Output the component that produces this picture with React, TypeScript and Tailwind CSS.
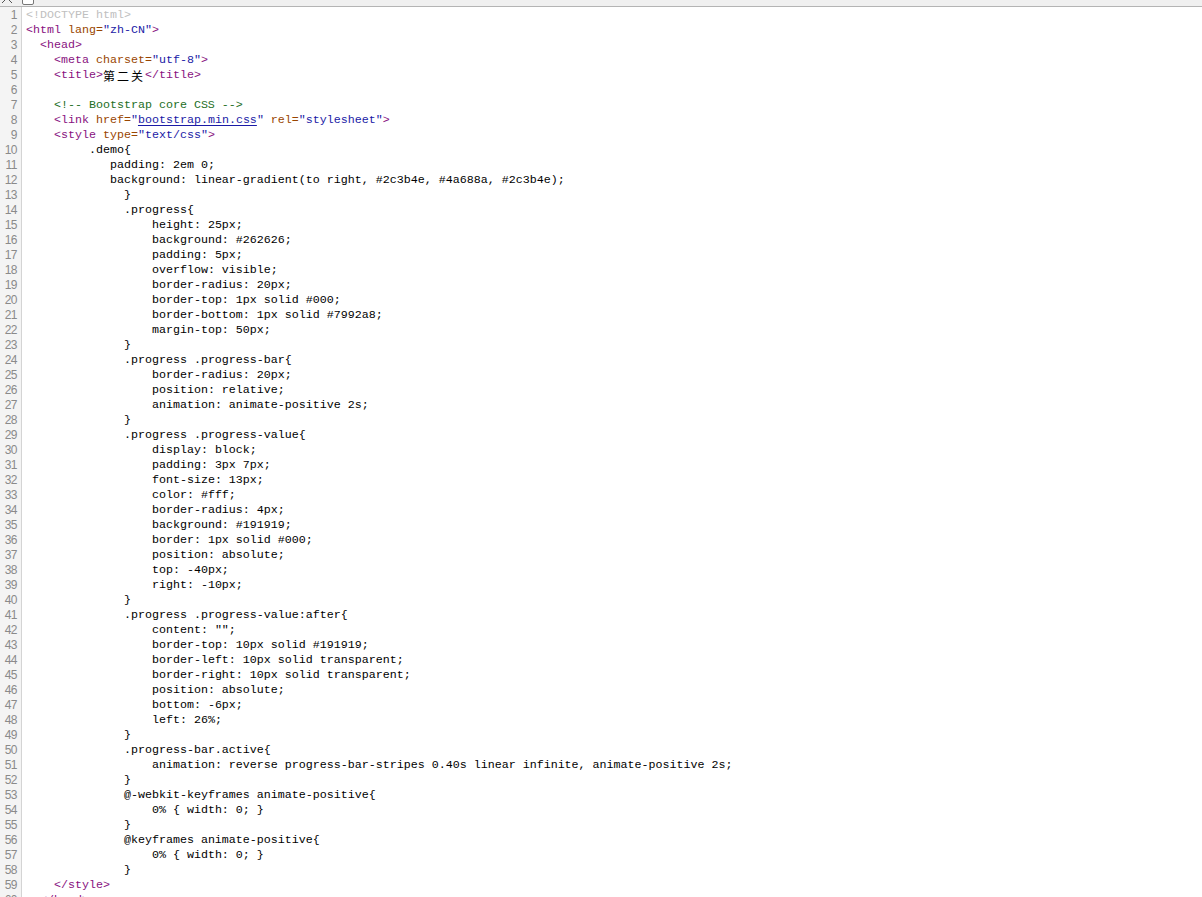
import React from 'react';

type Kind = 'tag' | 'attr' | 'val' | 'cmt' | 'doc' | 'txt' | 'link' | 'cjk';
type Seg = [Kind, string];

interface Line {
  indent: number;
  segs: Seg[];
}

const kindClass: Record<Kind, string> = {
  tag: 'text-[#881280]',
  attr: 'text-[#994500]',
  val: 'text-[#1a1aa6]',
  cmt: 'text-[#236e25]',
  doc: 'text-[#c0c0c0]',
  txt: 'text-black',
  link: 'text-[#1a1aa6] underline underline-offset-2',
  cjk: 'inline-block align-top leading-[15px] text-[12px] text-black tracking-[2px] font-["Noto_Sans_CJK_SC",sans-serif]',
};

const css = (indent: number, text: string): Line => ({ indent, segs: [['txt', text]] });

const lines: Line[] = [
  { indent: 0, segs: [['doc', '<!DOCTYPE html>']] },
  { indent: 0, segs: [['tag', '<html'], ['attr', ' lang='], ['val', '"zh-CN"'], ['tag', '>']] },
  { indent: 2, segs: [['tag', '<head>']] },
  { indent: 4, segs: [['tag', '<meta'], ['attr', ' charset='], ['val', '"utf-8"'], ['tag', '>']] },
  { indent: 4, segs: [['tag', '<title>'], ['cjk', '第二关'], ['tag', '</title>']] },
  { indent: 0, segs: [] },
  { indent: 4, segs: [['cmt', '<!-- Bootstrap core CSS -->']] },
  {
    indent: 4,
    segs: [
      ['tag', '<link'],
      ['attr', ' href='],
      ['val', '"'],
      ['link', 'bootstrap.min.css'],
      ['val', '"'],
      ['attr', ' rel='],
      ['val', '"stylesheet"'],
      ['tag', '>'],
    ],
  },
  { indent: 4, segs: [['tag', '<style'], ['attr', ' type='], ['val', '"text/css"'], ['tag', '>']] },
  css(9, '.demo{'),
  css(12, 'padding: 2em 0;'),
  css(12, 'background: linear-gradient(to right, #2c3b4e, #4a688a, #2c3b4e);'),
  css(14, '}'),
  css(14, '.progress{'),
  css(18, 'height: 25px;'),
  css(18, 'background: #262626;'),
  css(18, 'padding: 5px;'),
  css(18, 'overflow: visible;'),
  css(18, 'border-radius: 20px;'),
  css(18, 'border-top: 1px solid #000;'),
  css(18, 'border-bottom: 1px solid #7992a8;'),
  css(18, 'margin-top: 50px;'),
  css(14, '}'),
  css(14, '.progress .progress-bar{'),
  css(18, 'border-radius: 20px;'),
  css(18, 'position: relative;'),
  css(18, 'animation: animate-positive 2s;'),
  css(14, '}'),
  css(14, '.progress .progress-value{'),
  css(18, 'display: block;'),
  css(18, 'padding: 3px 7px;'),
  css(18, 'font-size: 13px;'),
  css(18, 'color: #fff;'),
  css(18, 'border-radius: 4px;'),
  css(18, 'background: #191919;'),
  css(18, 'border: 1px solid #000;'),
  css(18, 'position: absolute;'),
  css(18, 'top: -40px;'),
  css(18, 'right: -10px;'),
  css(14, '}'),
  css(14, '.progress .progress-value:after{'),
  css(18, 'content: "";'),
  css(18, 'border-top: 10px solid #191919;'),
  css(18, 'border-left: 10px solid transparent;'),
  css(18, 'border-right: 10px solid transparent;'),
  css(18, 'position: absolute;'),
  css(18, 'bottom: -6px;'),
  css(18, 'left: 26%;'),
  css(14, '}'),
  css(14, '.progress-bar.active{'),
  css(18, 'animation: reverse progress-bar-stripes 0.40s linear infinite, animate-positive 2s;'),
  css(14, '}'),
  css(14, '@-webkit-keyframes animate-positive{'),
  css(18, '0% { width: 0; }'),
  css(14, '}'),
  css(14, '@keyframes animate-positive{'),
  css(18, '0% { width: 0; }'),
  css(14, '}'),
  { indent: 4, segs: [['tag', '</style>']] },
  { indent: 2, segs: [['tag', '</head>']] },
];

// partial toolbar peeking over the top edge
const TopBar: React.FC = () => (
  <div className="h-[7px] bg-[#f0f0f0] border-b border-[#b4b4b4] relative overflow-hidden">
    <svg className="absolute left-[1px] top-0" width="12" height="6" viewBox="0 0 12 6">
      <path d="M4 0 L1 3 M8 0 L11 3" stroke="#555" strokeWidth="1" fill="none" />
    </svg>
    <span className="absolute left-[22px] -top-[6px] w-[12px] h-[11px] rounded-[2px] border border-[#777] bg-white" />
  </div>
);

const App: React.FC = () => {
  return (
    <div className="min-h-screen bg-white font-['Liberation_Mono',monospace] text-[11.67px] leading-[15px]">
      <TopBar />
      <div className="flex">
        <div className="w-[22px] shrink-0 bg-[#f4f4f4] border-r border-[#d4d4d4] pt-px text-right pr-[4px] text-[#8a8a8a] font-['Liberation_Sans',sans-serif] text-[12px]">
          {lines.map((_, i) => (
            <div key={i} className="h-[15px] tracking-[-0.5px]">
              {i + 1}
            </div>
          ))}
        </div>
        <div className="pl-[4px] pt-px">
          {lines.map((line, i) => (
            <div key={i} className="h-[15px] whitespace-pre">
              {' '.repeat(line.indent)}
              {line.segs.map(([kind, text], j) => (
                <span key={j} className={kindClass[kind]}>
                  {text}
                </span>
              ))}
            </div>
          ))}
        </div>
      </div>
    </div>
  );
};

export default App;
